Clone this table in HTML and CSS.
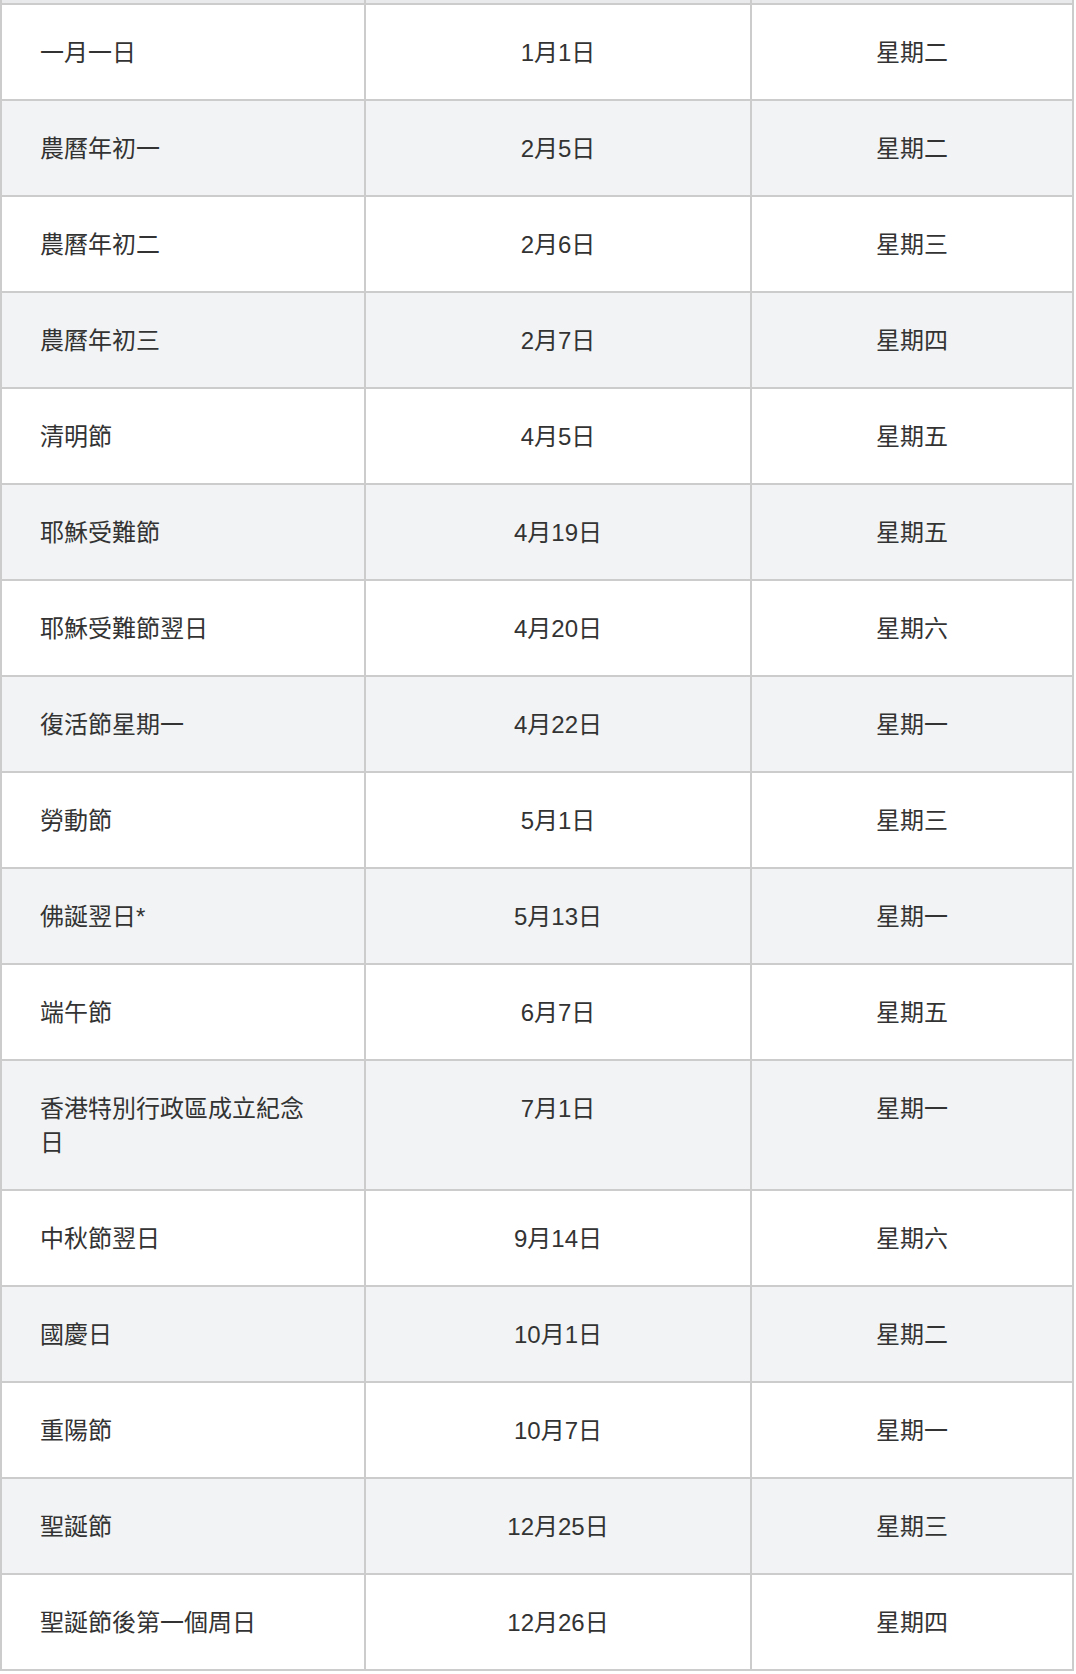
FILE: index.html
```html
<!DOCTYPE html>
<html lang="zh-Hant">
<head>
<meta charset="utf-8">
<title>公眾假期</title>
<link rel="stylesheet" href="styles.css">
</head>
<body>
<table class="holidays">
  <colgroup>
    <col class="c-name">
    <col class="c-date">
    <col class="c-day">
  </colgroup>
  <tbody>
    <tr class="prev"><td></td><td></td><td></td></tr>
    <tr><td>一月一日</td><td>1月1日</td><td>星期二</td></tr>
    <tr><td>農曆年初一</td><td>2月5日</td><td>星期二</td></tr>
    <tr><td>農曆年初二</td><td>2月6日</td><td>星期三</td></tr>
    <tr><td>農曆年初三</td><td>2月7日</td><td>星期四</td></tr>
    <tr><td>清明節</td><td>4月5日</td><td>星期五</td></tr>
    <tr><td>耶穌受難節</td><td>4月19日</td><td>星期五</td></tr>
    <tr><td>耶穌受難節翌日</td><td>4月20日</td><td>星期六</td></tr>
    <tr><td>復活節星期一</td><td>4月22日</td><td>星期一</td></tr>
    <tr><td>勞動節</td><td>5月1日</td><td>星期三</td></tr>
    <tr><td>佛誕翌日*</td><td>5月13日</td><td>星期一</td></tr>
    <tr><td>端午節</td><td>6月7日</td><td>星期五</td></tr>
    <tr><td>香港特別行政區成立紀念日</td><td>7月1日</td><td>星期一</td></tr>
    <tr><td>中秋節翌日</td><td>9月14日</td><td>星期六</td></tr>
    <tr><td>國慶日</td><td>10月1日</td><td>星期二</td></tr>
    <tr><td>重陽節</td><td>10月7日</td><td>星期一</td></tr>
    <tr><td>聖誕節</td><td>12月25日</td><td>星期三</td></tr>
    <tr><td>聖誕節後第一個周日</td><td>12月26日</td><td>星期四</td></tr>
  </tbody>
</table>
</body>
</html>
```

FILE: styles.css
```css
html, body {
  margin: 0;
  padding: 0;
  background: #ffffff;
}

.holidays {
  width: 1074px;
  table-layout: fixed;
  border-collapse: separate;
  border-spacing: 0;
  font-family: "Liberation Sans", "Noto Sans CJK TC", sans-serif;
  font-size: 24px;
  line-height: 34px;
  color: #333333;
}

.c-name { width: 366px; }
.c-date { width: 386px; }
.c-day { width: 322px; }

.holidays td {
  padding: 31px 36px 29px 36px;
  border-right: 2px solid #cccccc;
  border-bottom: 2px solid #cccccc;
  vertical-align: top;
  text-align: center;
  background: #ffffff;
}

.holidays td:first-child {
  border-left: 2px solid #cccccc;
  padding-left: 38px;
  padding-right: 40px;
  text-align: left;
}

.holidays tr:nth-child(odd) td {
  background: #f2f3f5;
}

.holidays tr.prev td {
  height: 3px;
  padding: 0;
  font-size: 0;
  line-height: 0;
  background: #e9eaec;
}
```
